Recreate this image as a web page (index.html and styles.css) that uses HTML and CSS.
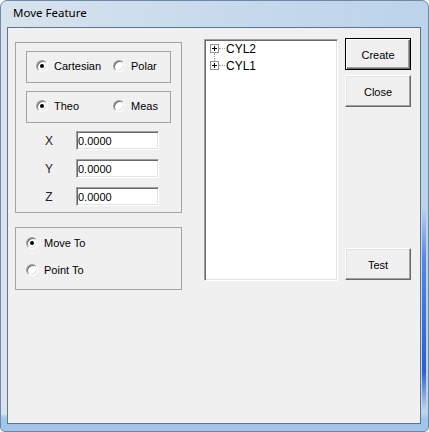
FILE: index.html
```html
<!DOCTYPE html>
<html lang="en">
<head>
    <meta charset="UTF-8">
    <meta name="viewport" content="width=device-width, initial-scale=1.0">
    <title>Move Feature</title>
    <link rel="stylesheet" href="styles.css">
</head>
<body>
    <div class="window">
        <div class="titlebar">Move Feature</div>
        <div class="client">
            <div class="left-col">
                <div class="group coords">
                    <div class="option-box">
                        <label class="option"><span class="radio checked"></span>Cartesian</label>
                        <label class="option"><span class="radio"></span>Polar</label>
                    </div>
                    <div class="option-box">
                        <label class="option"><span class="radio checked"></span>Theo</label>
                        <label class="option"><span class="radio"></span>Meas</label>
                    </div>
                    <div class="fields">
                        <div class="field-row">
                            <span class="field-label">X</span>
                            <input type="text" class="field-input" value="0.0000">
                        </div>
                        <div class="field-row">
                            <span class="field-label">Y</span>
                            <input type="text" class="field-input" value="0.0000">
                        </div>
                        <div class="field-row">
                            <span class="field-label">Z</span>
                            <input type="text" class="field-input" value="0.0000">
                        </div>
                    </div>
                </div>
                <div class="group mode">
                    <label class="radio-row"><span class="radio checked"></span>Move To</label>
                    <label class="radio-row"><span class="radio"></span>Point To</label>
                </div>
            </div>

            <div class="tree">
                <div class="tree-row has-next">
                    <svg class="expander" width="9" height="9" viewBox="0 0 9 9">
                        <rect x="0.5" y="0.5" width="8" height="8" fill="#fff" stroke="#919191"/>
                        <path d="M2 4.5h5M4.5 2v5" stroke="#000" stroke-width="1"/>
                    </svg>
                    <span class="dots"></span>
                    <span>CYL2</span>
                </div>
                <div class="tree-row">
                    <svg class="expander" width="9" height="9" viewBox="0 0 9 9">
                        <rect x="0.5" y="0.5" width="8" height="8" fill="#fff" stroke="#919191"/>
                        <path d="M2 4.5h5M4.5 2v5" stroke="#000" stroke-width="1"/>
                    </svg>
                    <span class="dots"></span>
                    <span>CYL1</span>
                </div>
            </div>

            <div class="buttons">
                <button class="btn default">Create</button>
                <button class="btn">Close</button>
                <button class="btn test">Test</button>
            </div>
        </div>
    </div>
</body>
</html>
```

FILE: styles.css
```css
body {
    margin: 0;
    background-color: #fff;
    font-family: 'Liberation Sans', Arial, sans-serif;
    font-size: 11px;
    color: #000;
}

.window {
    box-sizing: border-box;
    width: 429px;
    height: 432px;
    border: 1px solid #6d88a8;
    border-radius: 7px 7px 5px 5px;
    padding: 0 7px 7px 6px;
    display: flex;
    flex-direction: column;
    background:
        linear-gradient(to bottom, rgba(70, 120, 215, 0) 48%, #5a88da 60%, #2f5ec6 86%, rgba(70, 120, 215, 0) 95%) right 2px top 0 / 4px 100% no-repeat,
        linear-gradient(to bottom, rgba(160, 198, 236, 0) 96%, #a3c5ea 97%),
        linear-gradient(to right, #d8e3ed 0%, #c9dbec 45%, #bcd3ea 100%);
}

.titlebar {
    height: 26px;
    box-sizing: border-box;
    padding: 4px 0 0 6px;
    line-height: 16px;
    font-family: 'Noto Sans', sans-serif;
    font-size: 11.5px;
    white-space: nowrap;
}

.client {
    flex: 1;
    display: flex;
    align-items: flex-start;
    background-color: #f0f0f0;
    border: 1px solid #5e7590;
    padding: 10px 0 0 7px;
}

/* left side group boxes */
.left-col {
    width: 167px;
    margin-top: 4px;
}

.group {
    box-sizing: border-box;
    border: 1px solid #a3a3a3;
}

.coords {
    height: 171px;
    padding: 8px 10px 0 10px;
}

.option-box {
    box-sizing: border-box;
    height: 32px;
    border: 1px solid #a3a3a3;
    display: flex;
    align-items: center;
    padding: 0 0 3px 9px;
    margin-bottom: 8px;
    white-space: nowrap;
}

.option {
    flex: none;
    width: 77px;
    display: flex;
    align-items: center;
    gap: 6px;
}

.radio {
    box-sizing: border-box;
    width: 12px;
    height: 12px;
    flex: none;
    border-radius: 50%;
    border: 1px solid;
    border-color: #a0a0a0 #fff #fff #a0a0a0;
    background-color: #fff;
    box-shadow: inset 1px 1px #696969, inset -1px -1px #e3e3e3;
    display: flex;
    align-items: center;
    justify-content: center;
}

.radio.checked::after {
    content: "";
    width: 4px;
    height: 4px;
    border-radius: 50%;
    background-color: #000;
}

.fields {
    margin-top: 2px;
}

.field-row {
    display: flex;
    align-items: center;
    height: 19px;
    margin-bottom: 9px;
}

.field-label {
    width: 26px;
    margin-left: 10px;
    text-align: center;
    font-size: 12px;
    color: #222;
}

.field-input {
    box-sizing: border-box;
    width: 83px;
    height: 19px;
    margin: 0 0 0 14px;
    padding: 0 0 0 1px;
    border: 1px solid;
    border-color: #a0a0a0 #fff #fff #a0a0a0;
    box-shadow: inset 1px 1px #696969, inset -1px -1px #e3e3e3;
    background-color: #fff;
    font-family: 'Liberation Sans', Arial, sans-serif;
    font-size: 11px;
    color: #000;
    outline: none;
}

.mode {
    height: 63px;
    margin-top: 14px;
    padding: 8px 0 0 10px;
}

.radio-row {
    display: flex;
    align-items: center;
    gap: 6px;
    height: 14px;
    margin-bottom: 13px;
}

/* tree view */
.tree {
    box-sizing: border-box;
    width: 134px;
    height: 242px;
    margin: 1px 0 0 22px;
    padding-left: 5px;
    background-color: #fff;
    border: 1px solid;
    border-color: #a0a0a0 #fff #fff #a0a0a0;
    box-shadow: inset 1px 1px #696969, inset -1px -1px #e3e3e3;
    font-size: 12px;
}

.tree-row {
    position: relative;
    display: flex;
    align-items: center;
    height: 17px;
}

.tree-row.has-next::after {
    content: "";
    position: absolute;
    left: 4px;
    top: 13px;
    height: 8px;
    border-left: 1px dotted #a0a0a0;
}

.expander {
    display: block;
    flex: none;
}

.dots {
    width: 6px;
    margin-right: 1px;
    border-top: 1px dotted #a0a0a0;
}

/* buttons */
.buttons {
    width: 66px;
    margin-left: 7px;
    display: flex;
    flex-direction: column;
}

.btn {
    box-sizing: border-box;
    height: 32px;
    margin-bottom: 5px;
    padding: 2px 0 0 0;
    background-color: #f0f0f0;
    border: 1px solid;
    border-color: #fff #696969 #696969 #fff;
    box-shadow: inset -1px -1px #a0a0a0, inset 1px 1px #e3e3e3;
    font-family: 'Liberation Sans', Arial, sans-serif;
    font-size: 11px;
    color: #000;
}

.btn.default {
    border-color: #000;
    box-shadow: inset 1px 1px #fff, inset -1px -1px #696969, inset -2px -2px #a0a0a0;
}

.btn.test {
    margin-top: 136px;
}
```
